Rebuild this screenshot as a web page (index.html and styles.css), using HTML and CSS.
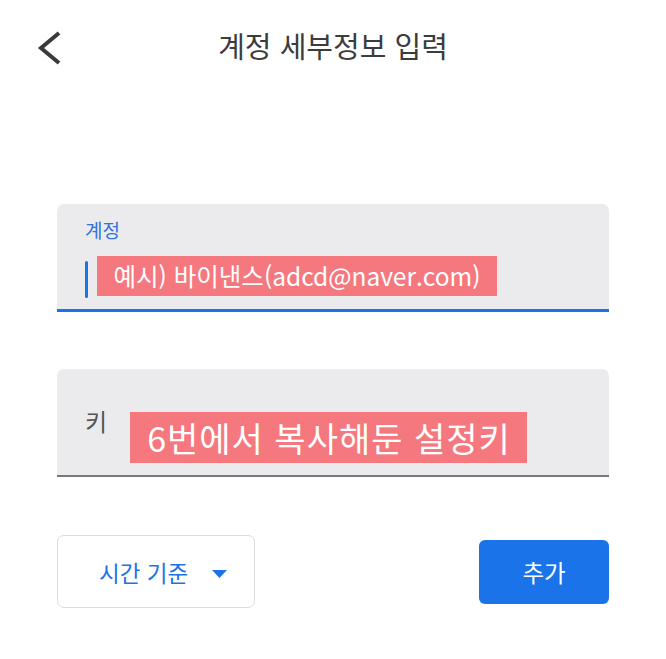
FILE: index.html
```html
<!DOCTYPE html>
<html lang="ko">
<head>
<meta charset="utf-8">
<title>계정 세부정보 입력</title>
<link rel="stylesheet" href="styles.css">
</head>
<body>
<header class="topbar">
  <button class="back" aria-label="뒤로">
    <svg class="back-icon" width="30" height="40" viewBox="0 0 30 40">
      <polyline points="27,5 9,20 27,35" fill="none" stroke="#3a3a3a" stroke-width="4" stroke-linejoin="miter"/>
    </svg>
  </button>
  <h1 class="title">계정 세부정보 입력</h1>
  <span class="spacer"></span>
</header>
<main class="content">
  <div class="field field-active">
    <div class="field-label">계정</div>
    <div class="field-row">
      <span class="cursor"></span>
      <span class="hint hint-account">예시) 바이낸스(adcd@naver.com)</span>
    </div>
  </div>
  <div class="field field-idle">
    <div class="field-row">
      <span class="idle-label">키</span>
      <span class="hint hint-key">6번에서 복사해둔 설정키</span>
    </div>
  </div>
  <div class="actions">
    <button class="select-btn">
      <span>시간 기준</span>
      <svg class="caret" width="15" height="8" viewBox="0 0 15 8"><polygon points="0,0 15,0 7.5,8" fill="#1a73e8"/></svg>
    </button>
    <button class="add-btn">추가</button>
  </div>
</main>
</body>
</html>
```
FILE: styles.css
```css
* { box-sizing: border-box; }
html, body {
  margin: 0;
  padding: 0;
  background: #ffffff;
  font-family: "Noto Sans CJK KR", "Noto Sans", sans-serif;
}
.topbar {
  height: 90px;
  display: grid;
  grid-template-columns: 1fr auto 1fr;
  align-items: center;
}
.back {
  justify-self: start;
  margin: 6px 0 0 32px;
  padding: 0;
  border: 0;
  background: none;
  display: flex;
}
.title {
  margin: 0;
  font-size: 29px;
  line-height: 29px;
  font-weight: 400;
  color: #3c3c3c;
}
.content {
  margin-top: 114px;
  padding: 0 57px;
}
.field {
  height: 108px;
  background: #ebebee;
  border-radius: 7px 7px 0 0;
  padding-left: 28px;
}
.field-active {
  padding-top: 14px;
  border-bottom: 3px solid #1a73e8;
}
.field-label {
  font-size: 19px;
  line-height: 24px;
  color: #2f74d6;
  margin-bottom: 14px;
}
.field-row {
  display: flex;
  align-items: flex-start;
}
.cursor {
  width: 3px;
  height: 37px;
  margin-top: 5px;
  border-radius: 2px;
  background: #1a73e8;
}
.hint {
  background: #f5787f;
  color: #ffffff;
  text-align: center;
  white-space: nowrap;
}
.hint-account {
  margin-left: 9px;
  width: 400px;
  height: 40px;
  font-size: 24.5px;
  line-height: 40px;
}
.field-idle {
  margin-top: 57px;
  padding-top: 43px;
  border-bottom: 2px solid #77767b;
}
.idle-label {
  width: 45px;
  margin-top: -3px;
  font-size: 24px;
  line-height: 24px;
  color: #555555;
}
.hint-key {
  width: 397px;
  height: 51px;
  padding-left: 1px;
  font-size: 34px;
  line-height: 51px;
  letter-spacing: 1px;
}
.actions {
  margin-top: 58px;
  display: flex;
  justify-content: space-between;
  align-items: center;
}
.select-btn {
  width: 198px;
  height: 73px;
  border: 1.5px solid #dcdcdf;
  border-radius: 7px;
  background: #ffffff;
  display: flex;
  align-items: center;
  gap: 24px;
  padding: 0 0 0 41px;
  font-family: inherit;
  font-size: 22.5px;
  color: #1a73e8;
}
.caret { margin-top: 4px; }
.add-btn {
  width: 130px;
  height: 64px;
  border: 0;
  border-radius: 6px;
  background: #1a73e8;
  color: #ffffff;
  font-family: inherit;
  font-size: 23.5px;
}
```
